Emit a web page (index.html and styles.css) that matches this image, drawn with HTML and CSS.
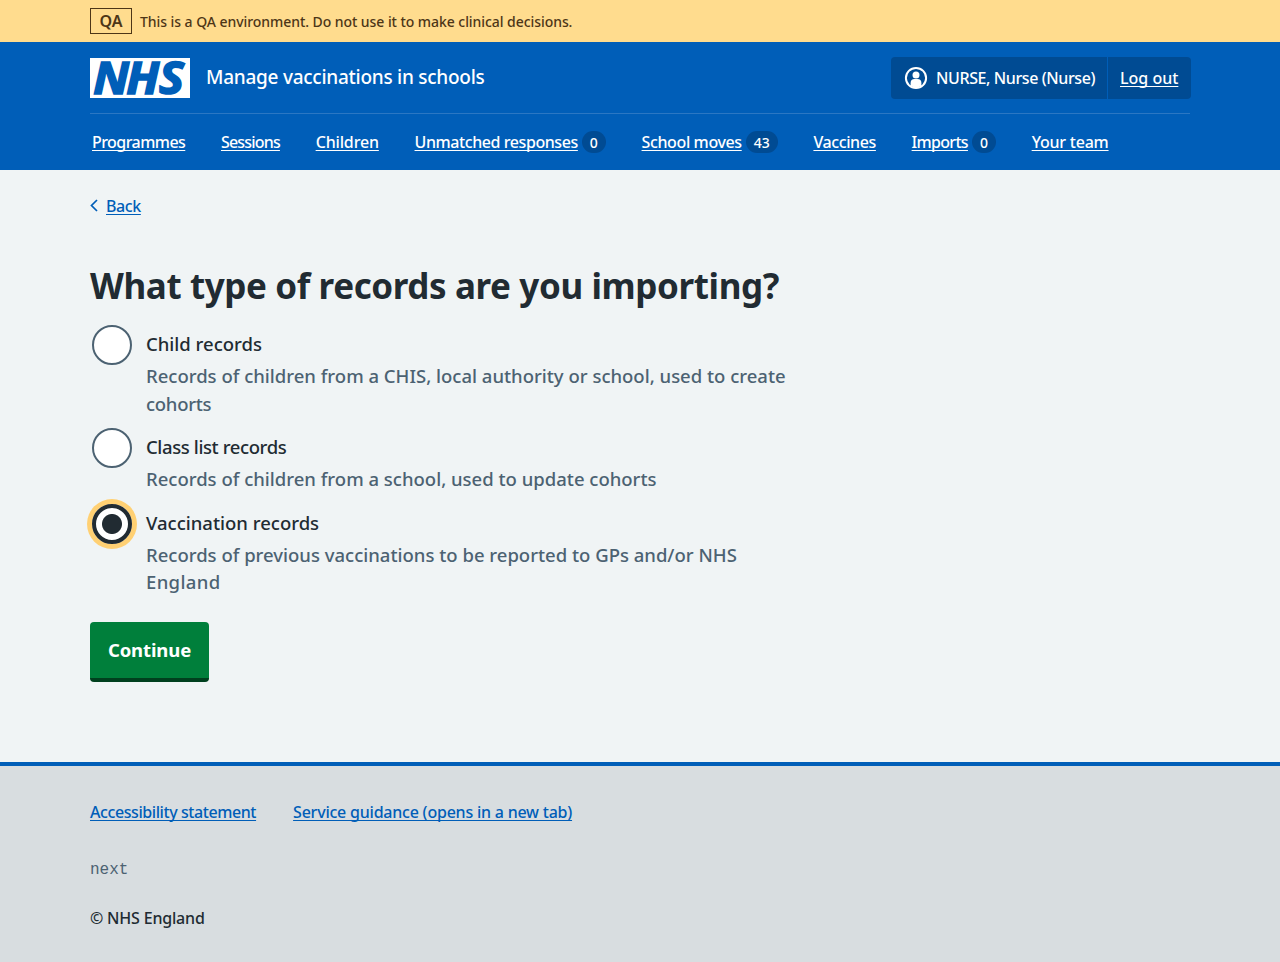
FILE: index.html
```html
<!DOCTYPE html>
<html lang="en">
<head>
<meta charset="utf-8">
<title>What type of records are you importing?</title>
<link rel="stylesheet" href="styles.css">
</head>
<body>
<div class="env"><div class="container env-row"><strong class="env-tag">QA</strong><span class="env-text">This is a QA environment. Do not use it to make clinical decisions.</span></div></div>
<header class="header">
  <div class="container">
    <div class="header-top">
      <svg class="logo" width="100" height="40" viewBox="0 0 100 40" role="img" aria-label="NHS"><rect width="100" height="40" fill="#fff"/><text class="logo-text" transform="scale(1.07 1)" x="3 34 64.5" y="35.600">NHS</text></svg>
      <span class="service">Manage vaccinations in schools</span>
      <div class="account">
        <span class="user"><svg width="24" height="24" viewBox="0 0 24 24"><circle cx="12" cy="12" r="10.1" fill="none" stroke="#fff" stroke-width="2"/><circle cx="12" cy="9" r="3.5" fill="#fff"/><path d="M6.600 20v-3a4 4 0 0 1 4-4h2.800a4 4 0 0 1 4 4V20q-5.400 3-10.800 0z" fill="#fff"/></svg><span class="user-name">NURSE, Nurse (Nurse)</span></span>
        <a class="logout" href="#"><span class="logout-text">Log out</span></a>
      </div>
    </div>
    <nav class="nav">
      <span><a class="n1" href="#">Programmes</a></span>
      <span><a class="n2" href="#">Sessions</a></span>
      <span><a class="n3" href="#">Children</a></span>
      <span><a class="n4" href="#">Unmatched responses</a><b class="badge">0</b></span>
      <span><a class="n5" href="#">School moves</a><b class="badge wide">43</b></span>
      <span><a class="n6" href="#">Vaccines</a></span>
      <span><a class="n7" href="#">Imports</a><b class="badge">0</b></span>
      <span><a class="n8" href="#">Your team</a></span>
    </nav>
  </div>
</header>
<main class="container main">
  <div class="back"><svg width="8" height="14" viewBox="0 0 8 14"><path d="M7 1 1.500 6.500 7 12" fill="none" stroke="#005eb8" stroke-width="1.700"/></svg><a href="#">Back</a></div>
  <h1 class="title">What type of records are you importing?</h1>
  <div class="radio"><span class="dot"></span><div><div class="label">Child records</div><div class="hint">Records of children from a CHIS, local authority or school, used to create<br><span class="tight">cohorts</span></div></div></div>
  <div class="radio"><span class="dot"></span><div><div class="label narrow">Class list records</div><div class="hint">Records of children from a school, used to update cohorts</div></div></div>
  <div class="radio"><span class="dot checked"></span><div><div class="label">Vaccination records</div><div class="hint">Records of previous vaccinations to be reported to GPs and/or NHS<br><span class="loose">England</span></div></div></div>
  <button class="button">Continue</button>
</main>
<footer class="footer">
  <div class="container">
    <div class="links"><a class="f1" href="#">Accessibility statement</a><a class="f2" href="#">Service guidance (opens in a new tab)</a></div>
    <div class="version">next</div>
    <div class="copy">© NHS England</div>
  </div>
</footer>
</body>
</html>
```
FILE: styles.css
```css
* { box-sizing: border-box; }
body { margin: 0; font: 500 16px/24px "Noto Sans", sans-serif; color: #212b32; background: #f0f4f5; white-space: nowrap; height: 962px; display: flex; flex-direction: column; }
a { color: #005eb8; text-decoration-thickness: 1px; text-underline-offset: 2px; text-decoration-skip-ink: none; }
.container { width: 1100px; margin: 0 auto; }
.env { background: #ffdc8e; color: #4d3617; height: 42px; padding-top: 8px; }
.env-row { display: flex; align-items: flex-start; gap: 8px; }
.env-tag { border: 1px solid #4d3617; width: 42px; height: 26px; text-align: center; font-size: 16px; line-height: 24px; font-weight: 600; }
.env-text { font-size: 14px; line-height: 26px; padding-top: 1px; letter-spacing: -0.06px; }
.header { background: #005eb8; color: #fff; height: 128px; }
.header a { color: #fff; }
.header-top { height: 72px; display: flex; align-items: center; border-bottom: 1px solid #2b77c3; }
.logo { overflow: visible; }
.logo-text { font: italic 700 44px "Noto Sans", sans-serif; fill: #005eb8; stroke: #005eb8; stroke-width: 1.6; }
.service { margin: -1px 0 0 16px; font-size: 19px; letter-spacing: -0.26px; }
.account { margin: 0 -1px 0 auto; width: 300px; height: 42px; display: flex; background: #004b93; border-radius: 4px; line-height: 42px; }
.user { width: 217px; padding-left: 13px; display: flex; align-items: center; gap: 8px; border-right: 1px solid #005eb8; }
.user-name { letter-spacing: -0.4px; }
.logout { padding-left: 12px; }
.nav { display: flex; gap: 35.700px; padding: 16px 2px 0; }
.nav > span { display: flex; align-items: center; }
.n1 { letter-spacing: -0.55px; }
.n2 { letter-spacing: -0.81px; }
.n3 { letter-spacing: -0.15px; }
.n4 { letter-spacing: -0.42px; }
.n5 { letter-spacing: -0.38px; }
.n6 { letter-spacing: -0.4px; }
.n7 { letter-spacing: -0.69px; }
.n8 { letter-spacing: -0.22px; }
.badge { width: 24px; height: 22px; margin-left: 4px; border-radius: 11px; background: #004b93; font-size: 14px; line-height: 23px; text-align: center; font-weight: 500; }
.badge.wide { width: 32px; }
.main { height: 592px; padding-top: 24px; }
.back { display: flex; align-items: center; gap: 8px; height: 24px; letter-spacing: -0.4px; }
.title { margin: 40px 0 10px; font-size: 35px; line-height: 56px; font-weight: 700; letter-spacing: -0.39px; }
.radio { display: flex; gap: 14px; padding-left: 2px; margin-bottom: 10px; }
.dot { width: 40px; height: 40px; border: 2px solid #4c6272; border-radius: 50%; background: #fff; margin-top: 1px; }
.dot.checked { border: 4px solid #212b32; box-shadow: 0 0 0 5px #ffd073; background: radial-gradient(circle, #212b32 9.500px, #fff 10.500px); }
.label { font-size: 18.500px; line-height: 40px; height: 38px; }
.narrow { letter-spacing: -0.39px; }
.hint { font-size: 18.500px; line-height: 27.500px; color: #4c6272; }
.tight { letter-spacing: -0.28px; }
.loose { letter-spacing: 0.35px; }
.button { display: block; margin-top: 26.500px; width: 119px; height: 60px; border: 0; border-bottom: 4px solid #00401e; border-radius: 4px; background: #007f3b; color: #fff; font: 700 18.500px/27px "Noto Sans", sans-serif; letter-spacing: -0.12px; padding: 0 0 2px; }
.footer { flex: 1; background: #d8dde0; border-top: 4px solid #005eb8; padding-top: 34px; }
.links { display: flex; gap: 37px; }
.f1 { letter-spacing: -0.42px; }
.f2 { letter-spacing: -0.22px; }
.version { margin-top: 34px; color: #4c6272; font-family: "Liberation Mono", monospace; }
.copy { margin-top: 24px; letter-spacing: -0.19px; }
```
